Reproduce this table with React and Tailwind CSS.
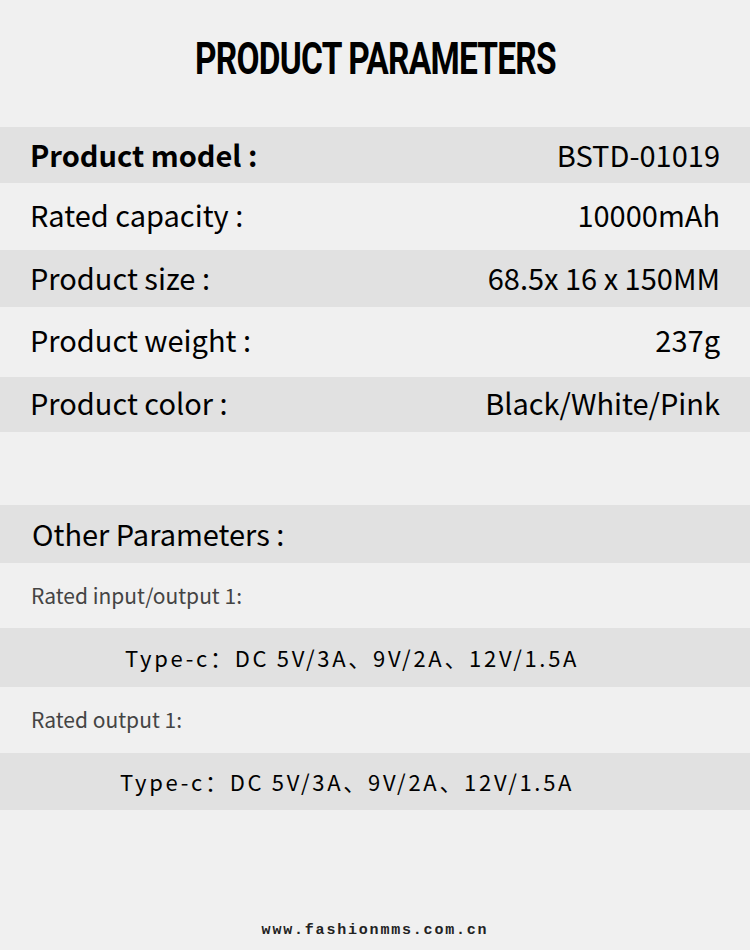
import React from 'react';

const specs = [
  { label: 'Product model :', value: 'BSTD-01019', shaded: true, bold: true, h: 'h-[56px] pb-0' },
  { label: 'Rated capacity :', value: '10000mAh', shaded: false, h: 'h-[67px] pb-[4px]' },
  { label: 'Product size :', value: '68.5x 16 x 150MM', shaded: true, h: 'h-[57px] pb-[2px]' },
  { label: 'Product weight :', value: '237g', shaded: false, h: 'h-[70px] pb-[4px]' },
  { label: 'Product color :', value: 'Black/White/Pink', shaded: true, h: 'h-[55px] pb-[4px]' },
];

const sans = "font-['Noto_Sans_CJK_SC','Noto_Sans',sans-serif]";

const App = () => {
  return (
    <div className={`w-[750px] h-[950px] bg-[#f0f0f0] flex flex-col text-black ${sans}`}>
      <div className="h-[127px] flex items-start justify-center pt-[31px]">
        <h1 className="font-['Roboto','Liberation_Sans',sans-serif] font-bold text-[44px] leading-[56px] tracking-[-1px] scale-x-[0.76]">
          PRODUCT PARAMETERS
        </h1>
      </div>

      {specs.map((s) => (
        <div
          key={s.label}
          className={`${s.h} flex items-center justify-between pl-[30px] pr-[30px] text-[29px] ${s.shaded ? 'bg-[#e1e1e1]' : ''}`}
        >
          <span className={s.bold ? 'font-bold' : ''}>{s.label}</span>
          <span>{s.value}</span>
        </div>
      ))}

      <div className="h-[73px]" />

      <div className="h-[58px] flex items-center pl-[32px] bg-[#e1e1e1] text-[29px]">
        Other Parameters :
      </div>
      <div className="h-[65px] flex items-center pl-[31px] text-[21px] text-[#444]">
        Rated input/output 1:
      </div>
      <div className="h-[59px] flex items-center pl-[125px] bg-[#e1e1e1] text-[22px] tracking-[2.7px]">
        Type-c：DC 5V/3A、9V/2A、12V/1.5A
      </div>
      <div className="h-[66px] flex items-center pl-[31px] text-[21px] text-[#444]">
        Rated output 1:
      </div>
      <div className="h-[57px] flex items-center pl-[120px] bg-[#e1e1e1] text-[22px] tracking-[2.7px]">
        Type-c：DC 5V/3A、9V/2A、12V/1.5A
      </div>

      <div className="flex-1 flex items-end justify-center pb-[8px]">
        <span className="font-['Liberation_Mono',monospace] font-bold text-[15px] tracking-[1.8px] text-[#222]">
          www.fashionmms.com.cn
        </span>
      </div>
    </div>
  );
};

export default App;
